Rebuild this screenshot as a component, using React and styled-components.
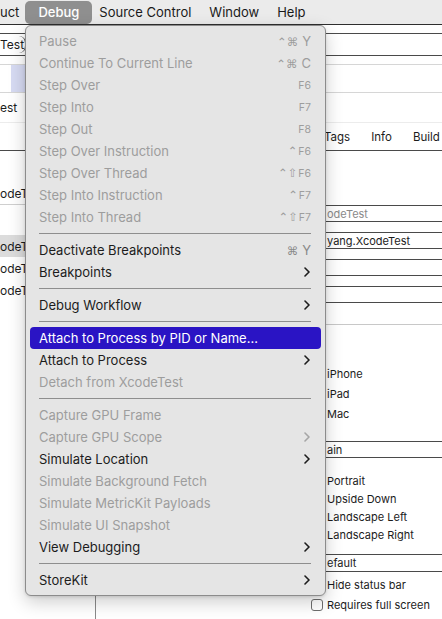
import React from 'react';
import styled, { createGlobalStyle, css } from 'styled-components';

const GlobalStyle = createGlobalStyle`
  html, body { margin: 0; padding: 0; background: #ffffff; }
  body {
    width: 442px; height: 619px; overflow: hidden;
    font-family: Inter, "Noto Sans", "DejaVu Sans", sans-serif;
    -webkit-font-smoothing: antialiased;
    color: #1c1c1c;
  }
  #root { width: 442px; height: 619px; position: relative; overflow: hidden; }
`;

const Screen = styled.div`
  position: relative;
  width: 442px;
  height: 619px;
  overflow: hidden;
  background: #ffffff;
`;

/* ---------- menu bar ---------- */
const MenuBar = styled.div`
  display: flex;
  align-items: center;
  height: 24px;
  background: #ebebeb;
  border-bottom: 1px solid #2e2e2e;
  font-size: 13px;
  white-space: nowrap;
`;

const BarTitle = styled.div`
  height: 23px;
  display: flex;
  align-items: center;
  padding: 0 ${p => (p.$active ? 13 : 9)}px;
  margin-left: ${p => p.$shift || 0}px;
  color: ${p => (p.$active ? '#ffffff' : '#1a1a1a')};
  background: ${p => (p.$active ? '#8f8f8f' : 'transparent')};
  border-radius: ${p => (p.$active ? '5px' : '0')};
  font-weight: ${p => (p.$active ? 500 : 400)};
`;

/* ---------- window behind ---------- */
const Window = styled.div`
  display: flex;
  flex-direction: column;
  font-size: 11px;
  white-space: nowrap;
`;

const JumpBar = styled.div`
  margin-top: 8px;
  height: 21px;
  border-top: 1px solid #4a4a4a;
  border-bottom: 1px solid #4a4a4a;
  display: flex;
  align-items: center;
  font-size: 12px;
`;

const JumpSegment = styled.div`
  height: 17px;
  display: flex;
  align-items: center;
  padding-right: 1px;
  border-right: 1.5px solid #3a3a3a;
  border-radius: 0 7px 7px 0;
`;

const TabStrip = styled.div`
  margin-top: 8px;
  height: 27px;
  border-top: 1px solid #d6d6d6;
  border-bottom: 1px solid #d6d6d6;
  display: flex;
`;

const EditorTab = styled.div`
  margin-left: 11px;
  width: 120px;
  background: #d7dbf3;
`;

const TitleRow = styled.div`
  height: 29px;
  border-bottom: 1px solid #ececec;
  display: flex;
  align-items: center;
  font-size: 12px;
`;

const SettingsTabs = styled.div`
  height: 27px;
  border-bottom: 1px solid #4a4a4a;
  display: flex;
  align-items: center;
  gap: 21px;
  padding-left: 324px;
  font-size: 11.5px;
`;

const Editor = styled.div`
  display: flex;
  height: 470px;
`;

const Sidebar = styled.div`
  width: 95px;
  border-right: 1px solid #8a8a8a;
  padding-top: 31px;
  display: flex;
  flex-direction: column;
`;

const SideItem = styled.div`
  height: 22px;
  display: flex;
  align-items: center;
  background: ${p => (p.$selected ? '#dcdcdc' : 'transparent')};
  margin-top: ${p => p.$gap || 0}px;
  font-size: 12px;
`;

const SideDivider = styled.div`
  height: 1px;
  background: #cfcfcf;
`;

const Form = styled.div`
  flex: 1;
  display: flex;
  flex-direction: column;
  padding-left: 215px;
`;

const Field = styled.div`
  margin-top: ${p => p.$gap}px;
  height: ${p => p.$h || 15}px;
  border-top: 1px solid #4a4a4a;
  border-bottom: 1px solid #4a4a4a;
  display: flex;
  align-items: center;
  padding-left: 16px;
  color: ${p => (p.$placeholder ? '#8a8a8a' : '#1c1c1c')};
`;

const SectionRule = styled.div`
  margin-top: ${p => p.$gap}px;
  height: 1px;
  background: #c8c8c8;
`;

const CheckRow = styled.div`
  margin-top: ${p => p.$gap || 0}px;
  height: ${p => p.$h}px;
  display: flex;
  align-items: center;
  gap: 4px;
`;

const CheckBox = styled.span`
  width: 10px;
  height: 10px;
  border: 1px solid #6e6e6e;
  border-radius: 3px;
  background: #fff;
  flex: none;
`;

/* ---------- dropdown menu ---------- */
const DropMenu = styled.div`
  position: absolute;
  left: 25px;
  top: 25px;
  width: 299px;
  padding: 4px 0;
  background: #e5e5e5;
  border: 1px solid #8c8c8c;
  border-radius: 6px;
  box-shadow: 0 6px 18px rgba(0, 0, 0, 0.2), 0 1px 3px rgba(0, 0, 0, 0.12);
  font-size: 13px;
  white-space: nowrap;
`;

const Item = styled.div`
  height: 22px;
  margin: 0 4px;
  padding: 0 10px 0 9px;
  display: flex;
  align-items: center;
  border-radius: 4px;
  color: ${p => (p.$disabled ? '#9d9d9d' : '#1c1c1c')};
  ${p =>
    p.$active &&
    css`
      background: #2a14c4;
      color: #ffffff;
    `}
`;

const Label = styled.span`
  flex: 1;
`;

const Shortcut = styled.span`
  display: flex;
  align-items: baseline;
  color: ${p => (p.$disabled ? '#9d9d9d' : '#8a8a8a')};
`;

const Mods = styled.span`
  font-family: "DejaVu Sans", Inter, sans-serif;
  font-size: 11.5px;
  margin-right: ${p => (p.$spaced ? 4 : 1)}px;
`;

const Key = styled.span`
  font-size: ${p => (p.$small ? 10.5 : 13)}px;
`;

const Separator = styled.div`
  height: 1px;
  margin: 5px 14px 5px 13px;
  background: #8e8e8e;
`;

const Chevron = ({ disabled }) => (
  <svg width="6" height="10" viewBox="0 0 6 10" style={{ marginRight: 1 }}>
    <path
      d="M1 1 L5 5 L1 9"
      fill="none"
      stroke={disabled ? '#a5a5a5' : '#1c1c1c'}
      strokeWidth="1.6"
      strokeLinecap="round"
      strokeLinejoin="round"
    />
  </svg>
);

const menu = [
  { label: 'Pause', mods: '⌃⌘', key: 'Y', spaced: true, disabled: true },
  { label: 'Continue To Current Line', mods: '⌃⌘', key: 'C', spaced: true, disabled: true },
  { label: 'Step Over', key: 'F6', small: true, disabled: true },
  { label: 'Step Into', key: 'F7', small: true, disabled: true },
  { label: 'Step Out', key: 'F8', small: true, disabled: true },
  { label: 'Step Over Instruction', mods: '⌃', key: 'F6', small: true, disabled: true },
  { label: 'Step Over Thread', mods: '⌃⇧', key: 'F6', small: true, disabled: true },
  { label: 'Step Into Instruction', mods: '⌃', key: 'F7', small: true, disabled: true },
  { label: 'Step Into Thread', mods: '⌃⇧', key: 'F7', small: true, disabled: true },
  { sep: true },
  { label: 'Deactivate Breakpoints', mods: '⌘', key: 'Y', spaced: true },
  { label: 'Breakpoints', sub: true },
  { sep: true },
  { label: 'Debug Workflow', sub: true },
  { sep: true },
  { label: 'Attach to Process by PID or Name...', active: true },
  { label: 'Attach to Process', sub: true },
  { label: 'Detach from XcodeTest', disabled: true },
  { sep: true },
  { label: 'Capture GPU Frame', disabled: true },
  { label: 'Capture GPU Scope', disabled: true, sub: true },
  { label: 'Simulate Location', sub: true },
  { label: 'Simulate Background Fetch', disabled: true },
  { label: 'Simulate MetricKit Payloads', disabled: true },
  { label: 'Simulate UI Snapshot', disabled: true },
  { label: 'View Debugging', sub: true },
  { sep: true },
  { label: 'StoreKit', sub: true },
];

export default function App() {
  return (
    <Screen>
      <GlobalStyle />
      <MenuBar>
        <BarTitle $shift={-9}>uct</BarTitle>
        <BarTitle $active $shift={-3}>Debug</BarTitle>
        <BarTitle $shift={-2}>Source Control</BarTitle>
        <BarTitle>Window</BarTitle>
        <BarTitle>Help</BarTitle>
      </MenuBar>

      <Window>
        <JumpBar>
          <JumpSegment>Test</JumpSegment>
        </JumpBar>
        <TabStrip>
          <EditorTab />
        </TabStrip>
        <TitleRow>est</TitleRow>
        <SettingsTabs>
          <span>Tags</span>
          <span>Info</span>
          <span>Build</span>
        </SettingsTabs>
        <Editor>
          <Sidebar>
            <SideItem>odeTest</SideItem>
            <SideDivider />
            <SideItem $selected $gap={30}>odeTest</SideItem>
            <SideItem>odeTestTests</SideItem>
            <SideItem>odeTestUITests</SideItem>
          </Sidebar>
          <Form>
            <Field $gap={54} $placeholder>odeTest</Field>
            <Field $gap={10}>yang.XcodeTest</Field>
            <Field $gap={10} />
            <Field $gap={10} />
            <SectionRule $gap={21} />
            <CheckRow $gap={39} $h={20}><CheckBox />iPhone</CheckRow>
            <CheckRow $h={20}><CheckBox />iPad</CheckRow>
            <CheckRow $h={20}><CheckBox />Mac</CheckRow>
            <Field $gap={17}>ain</Field>
            <CheckRow $gap={14} $h={18}><CheckBox />Portrait</CheckRow>
            <CheckRow $h={18}><CheckBox />Upside Down</CheckRow>
            <CheckRow $h={18}><CheckBox />Landscape Left</CheckRow>
            <CheckRow $h={18}><CheckBox />Landscape Right</CheckRow>
            <Field $gap={10} $h={16}>efault</Field>
            <CheckRow $gap={3} $h={20}><CheckBox />Hide status bar</CheckRow>
            <CheckRow $h={20}><CheckBox />Requires full screen</CheckRow>
          </Form>
        </Editor>
      </Window>

      <DropMenu>
        {menu.map((m, i) =>
          m.sep ? (
            <Separator key={i} />
          ) : (
            <Item key={i} $disabled={m.disabled} $active={m.active}>
              <Label>{m.label}</Label>
              {m.key && (
                <Shortcut $disabled={m.disabled}>
                  {m.mods && <Mods $spaced={m.spaced}>{m.mods}</Mods>}
                  <Key $small={m.small}>{m.key}</Key>
                </Shortcut>
              )}
              {m.sub && <Chevron disabled={m.disabled} />}
            </Item>
          )
        )}
      </DropMenu>
    </Screen>
  );
}
